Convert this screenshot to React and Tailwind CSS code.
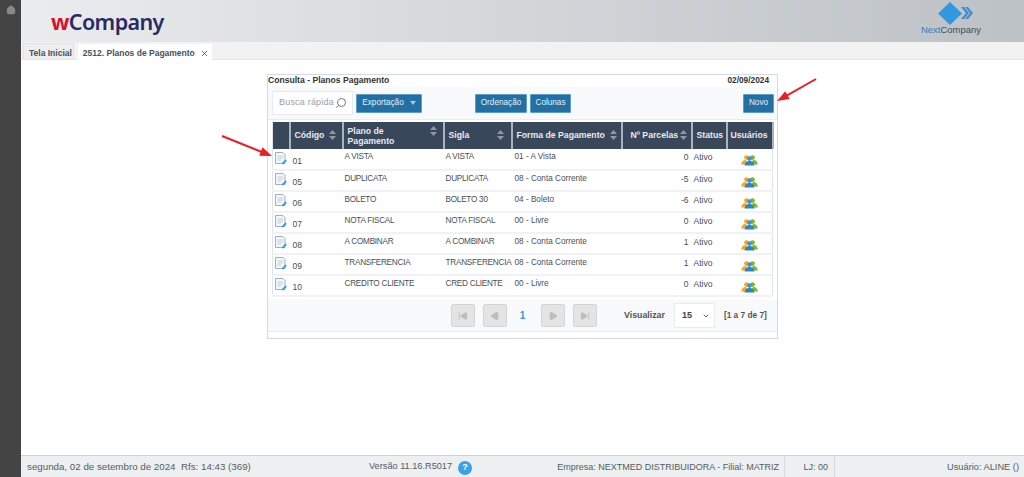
import { Home, X, Search, ChevronDown, SkipBack, Play, SkipForward } from 'lucide-react';

const rows = [
    ['01', 'A VISTA', 'A VISTA', '01 - A Vista', '0'],
    ['05', 'DUPLICATA', 'DUPLICATA', '08 - Conta Corrente', '-5'],
    ['06', 'BOLETO', 'BOLETO 30', '04 - Boleto', '-6'],
    ['07', 'NOTA FISCAL', 'NOTA FISCAL', '00 - Livre', '0'],
    ['08', 'A COMBINAR', 'A COMBINAR', '08 - Conta Corrente', '1'],
    ['09', 'TRANSFERENCIA', 'TRANSFERENCIA', '08 - Conta Corrente', '1'],
    ['10', 'CREDITO CLIENTE', 'CRED CLIENTE', '00 - Livre', '0'],
];

function SortIcon() {
    return (
        <svg width="7" height="10" viewBox="0 0 7 10" className="shrink-0">
            <path d="M3.5 0 L7 4 H0 Z M0 6 H7 L3.5 10 Z" fill="#8f98a5" />
        </svg>
    );
}

function EditIcon() {
    return (
        <svg width="12" height="13" viewBox="0 0 12 13" className="shrink-0">
            <path d="M.5 .5 H8 L10 2.5 V11.5 H.5 Z" fill="#f4f7fa" stroke="#9db0c1" strokeWidth="1" />
            <path d="M2.5 4 H8 M2.5 6 H8 M2.5 8 H6" stroke="#c3ced8" strokeWidth="1" />
            <path d="M7 11 L10.5 7.5 L11.8 8.7 L8.3 12.3 H7 Z" fill="#2b9be0" />
        </svg>
    );
}

function UsersIcon() {
    return (
        <svg width="17" height="11" viewBox="0 0 17 11" className="mx-auto">
            <circle cx="5.5" cy="2.6" r="2.4" fill="#f5a623" />
            <circle cx="11.5" cy="2.6" r="2.4" fill="#7cb82f" />
            <path d="M0 9.5 C1 5.5 3 5 5 5 L7 8.5 V9.5 Z" fill="#f5a623" />
            <path d="M17 9.5 C16 5.5 14 5 12 5 L10 8.5 V9.5 Z" fill="#7cb82f" />
            <circle cx="8.5" cy="3.6" r="2.3" fill="#3f93c9" />
            <path d="M3.5 10.5 C4 7 6 6 8.5 6 C11 6 13 7 13.5 10.5 Z" fill="#2f86bd" />
        </svg>
    );
}

function RedArrow({ className, x1, y1, x2, y2 }) {
    // seta vermelha desenhada por cima da tela
    const a = Math.atan2(y2 - y1, x2 - x1);
    const p = (d, o) => [x2 - d * Math.cos(a) - o * Math.sin(a), y2 - d * Math.sin(a) + o * Math.cos(a)].join(',');
    return (
        <svg className={className} width="60" height="40" viewBox="0 0 60 40">
            <line x1={x1} y1={y1} x2={x2 - 6 * Math.cos(a)} y2={y2 - 6 * Math.sin(a)} stroke="#ee1c25" strokeWidth="2" />
            <polygon points={`${x2},${y2} ${p(12, 4.5)} ${p(12, -4.5)}`} fill="#ee1c25" />
        </svg>
    );
}

function BlueButton({ children, className = '' }) {
    return (
        <button className={`h-[19px] bg-[#2270a4] border border-[#5d9cc6] text-[#e6eff5] text-[8.2px] rounded-[1px] ${className}`}>
            {children}
        </button>
    );
}

function PageButton({ children }) {
    return (
        <div className="w-[24px] h-[23px] bg-[#e4e4e4] border border-[#d4d4d4] rounded-[2px] flex items-center justify-center text-[#bdbdbd]">
            {children}
        </div>
    );
}

function Th({ children, className = '' }) {
    return <th className={`bg-[#39475a] border-r-2 border-[#aab3bd] text-[#e8ebef] text-[8.7px] font-bold text-left align-middle ${className}`}>{children}</th>;
}

export default function App() {
    return (
        <div className="w-[1024px] h-[477px] flex overflow-hidden bg-white font-['Liberation_Sans',Arial,sans-serif] text-[#444]">
            <aside className="w-[21px] shrink-0 bg-[#444444] flex justify-center pt-[5px]">
                <Home size={10} fill="#8a8a8a" stroke="#8a8a8a" />
            </aside>

            <div className="flex-1 flex flex-col min-w-0">
                <header className="h-[42px] shrink-0 bg-gradient-to-r from-[#eaecee] to-[#bcc1c5] flex items-start justify-between">
                    <div className="ml-[30px] mt-[6px] font-['Noto_Sans',sans-serif] text-[21.5px] leading-[32px] font-semibold tracking-[-0.6px] text-[#2a2a63]">
                        <span className="text-[#d8112c] font-bold">w</span>Company
                    </div>
                    <div className="mr-[43px] w-[60px] flex flex-col items-center">
                        <svg width="36" height="23" viewBox="0 0 36 23" className="mt-[2px] ml-[9px]">
                            <path d="M12 0 L24 11.5 L12 23 L0 11.5 Z" fill="#3498e0" />
                            <path d="M23 5 L26 5 L31 11 L26 17 L23 17 L28 11 Z" fill="#3d8fd0" />
                            <path d="M27 5 L30 5 L35 11 L30 17 L27 17 L32 11 Z" fill="#3d8fd0" />
                        </svg>
                        <div className="text-[9.5px] leading-[10px] mt-0 whitespace-nowrap text-[#444c54]">
                            <span className="text-[#2f7fc0]">Next</span>Company
                        </div>
                    </div>
                </header>

                <nav className="h-[18px] shrink-0 bg-[#f2f2f2] border-b border-[#e6e6e6] flex items-end pl-[2px] text-[8.5px] font-bold text-[#4a5058]">
                    <div className="h-[16px] pt-[3px] pl-[5px] pr-[1px] mr-[4px] bg-[#eeeeee] border border-[#e2e2e2] border-b-0 flex items-center">Tela Inicial</div>
                    <div className="h-[16px] pt-[3px] pl-[5px] pr-[3px] bg-white flex items-center gap-[5px] -mb-px">
                        2512. Planos de Pagamento
                        <X size={9} strokeWidth={2} className="text-[#444]" />
                    </div>
                </nav>

                <main className="flex-1 relative min-h-0 pt-[14px]">
                    <section className="ml-[246px] w-[511px] h-[265px] border border-[#cfdbe8] flex flex-col">
                        <div className="h-[12px] shrink-0 flex justify-between pt-[1px] text-[8.6px] font-bold leading-[9px] text-[#333] pr-[8px]">
                            <span>Consulta - Planos Pagamento</span>
                            <span className="text-[8.3px]">02/09/2024</span>
                        </div>
                        <div className="h-[33px] shrink-0 bg-[#f8f9fb] border-b border-[#e8ebef] flex items-center pl-[4px] pr-[3px]">
                            <div className="w-[81px] h-[24px] bg-white border border-[#e8ecf0] flex items-center pl-[6px] pr-[5px] justify-between text-[9px] text-[#9aa0a6] tracking-[0.2px] whitespace-nowrap">
                                <span>Busca rápida</span>
                                <Search size={12} className="text-[#777] -scale-x-100" />
                            </div>
                            <BlueButton className="w-[66px] ml-[3px] flex items-center justify-center gap-[6px]">
                                Exportação
                                <svg width="6" height="4" viewBox="0 0 6 4"><path d="M0 0 H6 L3 4 Z" fill="#a9c8de" /></svg>
                            </BlueButton>
                            <BlueButton className="w-[52px] ml-[53px]">Ordenação</BlueButton>
                            <BlueButton className="w-[41px] ml-[3px]">Colunas</BlueButton>
                            <BlueButton className="w-[31px] ml-auto">Novo</BlueButton>
                        </div>

                        <div className="pl-[4px] pr-[4px] pt-[2px] shrink-0">
                            <table className="w-[500px] table-fixed border-collapse border-l border-r border-[#dde5ee]">
                                <colgroup>
                                    <col className="w-[17px]" />
                                    <col className="w-[53px]" />
                                    <col className="w-[101px]" />
                                    <col className="w-[68px]" />
                                    <col className="w-[110px]" />
                                    <col className="w-[70px]" />
                                    <col className="w-[35px]" />
                                    <col className="w-[46px]" />
                                </colgroup>
                                <thead>
                                    <tr className="h-[27px]">
                                        <Th />
                                        <Th className="pl-[4px]"><span className="flex items-center gap-[5px]">Código <SortIcon /></span></Th>
                                        <Th className="pl-[4px] pr-[6px]">
                                            <span className="flex justify-between leading-[10px]">
                                                <span>Plano de<br />Pagamento</span>
                                                <SortIcon />
                                            </span>
                                        </Th>
                                        <Th className="pl-[4px] pr-[7px]"><span className="flex justify-between items-center">Sigla <SortIcon /></span></Th>
                                        <Th className="pl-[4px]"><span className="flex items-center gap-[5px] whitespace-nowrap">Forma de Pagamento <SortIcon /></span></Th>
                                        <Th className="pl-[8px]"><span className="flex items-center gap-[2px] whitespace-nowrap">Nº Parcelas <SortIcon /></span></Th>
                                        <Th className="pl-[4px]">Status</Th>
                                        <Th className="pl-[3px] border-r-0">Usuários</Th>
                                    </tr>
                                </thead>
                                <tbody className="text-[8.5px] text-[#4a4f55]">
                                    {rows.map((r) => (
                                        <tr key={r[0]} className="h-[21px] border-b-2 border-[#f0f2f5]">
                                            <td className="pl-[2px] pb-[2px]"><EditIcon /></td>
                                            <td className="pl-[3px] pt-[4px]">{r[0]}</td>
                                            <td className="pl-[2px] pb-[3px] text-[8.2px] tracking-[-0.25px] whitespace-nowrap">{r[1]}</td>
                                            <td className="pl-[2px] pb-[3px] text-[8.2px] tracking-[-0.25px] whitespace-nowrap">{r[2]}</td>
                                            <td className="pl-[3px] pb-[3px] text-[8.2px] whitespace-nowrap">{r[3]}</td>
                                            <td className="pr-[3px] pb-[3px] text-right">{r[4]}</td>
                                            <td className="pl-[2px] pb-[3px]">Ativo</td>
                                            <td className="pt-[3px]"><UsersIcon /></td>
                                        </tr>
                                    ))}
                                </tbody>
                            </table>
                        </div>

                        <div className="h-[32px] shrink-0 mt-[3px] bg-[#f8f9fb] border-b border-[#e8ebef] flex items-center pl-[183px]">
                            <PageButton><SkipBack size={10} fill="currentColor" /></PageButton>
                            <div className="ml-[8px]"><PageButton><Play size={10} fill="currentColor" className="rotate-180" /></PageButton></div>
                            <span className="w-[34px] pr-[3px] text-center text-[10px] font-bold text-[#3498e0]">1</span>
                            <PageButton><Play size={10} fill="currentColor" /></PageButton>
                            <div className="ml-[8px]"><PageButton><SkipForward size={10} fill="currentColor" /></PageButton></div>
                            <span className="ml-[27px] text-[8.8px] font-bold text-[#555]">Visualizar</span>
                            <div className="ml-[9px] w-[41px] h-[25px] bg-white border border-[#e8ecf0] flex items-center justify-between pl-[7px] pr-[4px] text-[9px] font-bold">
                                15
                                <ChevronDown size={8} strokeWidth={2.5} />
                            </div>
                            <span className="ml-[9px] text-[8.3px] font-bold text-[#555] whitespace-nowrap">[1 a 7 de 7]</span>
                        </div>
                    </section>

                    <RedArrow className="absolute left-[197px] top-[60px]" x1={4} y1={16} x2={54} y2={36} />
                    <RedArrow className="absolute left-[736px] top-[6px]" x1={59} y1={13} x2={20} y2={35} />
                </main>

                <footer className="h-[22px] shrink-0 bg-[#ecf0f1] border-t border-[#cfd2d4] flex items-center text-[#555c63] whitespace-nowrap">
                    <span className="ml-[6px] w-[342px] pt-[2px] text-[9.75px]">segunda, 02 de setembro de 2024 &nbsp;Rfs: 14:43 (369)</span>
                    <span className="pt-[1px] text-[9.2px]">Versão 11.16.R5017</span>
                    <span className="ml-[6px] mt-[3px] w-[14px] h-[14px] rounded-full bg-[#3aa0e8] text-white text-[9px] font-bold flex items-center justify-center">?</span>
                    <span className="ml-[1px] w-[312px] h-full flex items-center justify-end pt-[2px] pr-[5px] border-r border-[#d5d9db] text-[9px]">Empresa: NEXTMED DISTRIBUIDORA - Filial: MATRIZ</span>
                    <span className="w-[50px] h-full flex items-center justify-end pt-[2px] pr-[6px] border-r border-[#d5d9db] text-[9px]">LJ: 00</span>
                    <span className="flex-1 text-right pt-[2px] pr-[5px] text-[9.25px]">Usuário: ALINE ()</span>
                </footer>
            </div>
        </div>
    );
}
